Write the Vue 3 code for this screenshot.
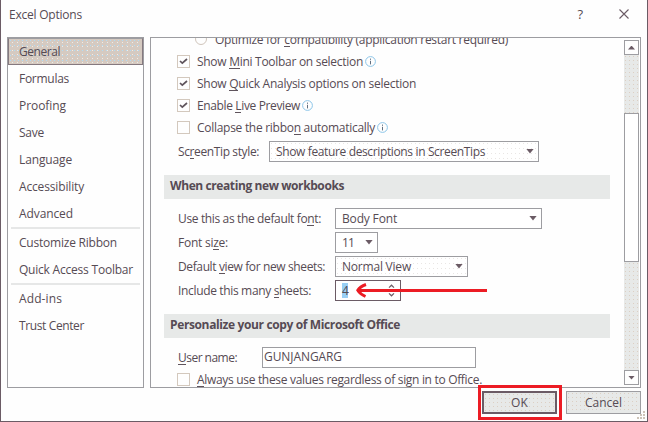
<script setup>
import { ref } from 'vue'

// Spreads a label to a set width by adjusting its tracking.
const vFit = {
  mounted(el, { value }) {
    const count = el.textContent.length
    const natural = el.getBoundingClientRect().width
    el.style.letterSpacing = `${(value - natural) / count}px`
  },
}

const groups = [
  [
    ['General', 41],
    ['Formulas', 50],
    ['Proofing', 47],
    ['Save', 25],
    ['Language', 53],
    ['Accessibility', 65],
    ['Advanced', 54],
  ],
  [
    ['Customize Ribbon', 98],
    ['Quick Access Toolbar', 114],
  ],
  [
    ['Add-ins', 43],
    ['Trust Center', 65],
  ],
]
const active = ref('General')

const checks = [
  { pre: 'Show ', key: 'M', post: 'ini Toolbar on selection', w: 166, on: true, info: true },
  { pre: 'Show ', key: 'Q', post: 'uick Analysis options on selection', w: 219, on: true, info: false },
  { pre: 'Enable ', key: 'L', post: 'ive Preview', w: 103, on: true, info: true },
  { pre: 'Collapse the ribbo', key: 'n', post: ' automatically', w: 178, on: false, info: true },
]
</script>

<template>
  <div class="window">
    <header class="titlebar">
      <span v-fit="73" class="title">Excel Options</span>
      <span class="help">?</span>
      <svg class="close" width="10" height="10" viewBox="0 0 10 10"><path d="M0.5 0.5 9.5 9.5M9.5 0.5 0.5 9.5" /></svg>
    </header>

    <main class="body">
      <nav class="side">
        <div v-for="(group, g) in groups" :key="g" class="group">
          <div v-for="[name, w] in group" :key="name" class="item" :class="{ active: name === active }" @click="active = name">
            <span v-fit="w">{{ name }}</span>
          </div>
        </div>
      </nav>

      <section class="panel">
        <div class="content">
          <div class="check radio-row">
            <span class="radio"></span>
            <span v-fit="293">Optimize for <u>c</u>ompatibility (application restart required)</span>
          </div>
          <div v-for="c in checks" :key="c.post" class="check">
            <span class="box"><svg v-if="c.on" width="11" height="11" viewBox="0 0 11 11"><path d="M2 5 4.3 7.2 9 3" /></svg></span>
            <span v-fit="c.w">{{ c.pre }}<u>{{ c.key }}</u>{{ c.post }}</span>
            <svg v-if="c.info" class="info" width="11" height="11" viewBox="0 0 11 11">
              <circle cx="5.5" cy="5.5" r="4.9" />
              <path d="M5.5 2.6v1.2M5.5 4.8v3.6" />
            </svg>
          </div>
          <div class="field tip">
            <span class="label"><span v-fit="81">Sc<u>r</u>eenTip style:</span></span>
            <div class="select dotted"><span v-fit="209">Show feature descriptions in ScreenTips</span><i class="caret"></i></div>
          </div>

          <h2><span v-fit="174">When creating new workbooks</span></h2>
          <div class="fields">
            <div class="field">
              <span class="label"><span v-fit="143">Use this as the default fo<u>n</u>t:</span></span>
              <div class="select font"><span v-fit="55">Body Font</span><i class="caret"></i></div>
            </div>
            <div class="field">
              <span class="label"><span v-fit="50">Font si<u>z</u>e:</span></span>
              <div class="select size"><span v-fit="12">11</span><i class="caret"></i></div>
            </div>
            <div class="field">
              <span class="label"><span v-fit="147">Default <u>v</u>iew for new sheets:</span></span>
              <div class="select view dotted"><span v-fit="69">Normal View</span><i class="caret"></i></div>
            </div>
            <div class="field">
              <span class="label"><span v-fit="133">Include this many <u>s</u>heets:</span></span>
              <div class="spinner">
                <span class="picked">4</span>
                <svg width="7" height="13" viewBox="0 0 7 13"><path d="M1 3.6 3.5 1.2 6 3.6M1 9.4 3.5 11.8 6 9.4" /></svg>
              </div>
            </div>
          </div>

          <h2><span v-fit="230">Personalize your copy of Microsoft Office</span></h2>
          <div class="field user">
            <span class="label"><span v-fit="59"><u>U</u>ser name:</span></span>
            <div class="input"><span v-fit="78">GUNJANGARG</span></div>
          </div>
          <div class="check always">
            <span class="box"></span>
            <span v-fit="285"><u>A</u>lways use these values regardless of sign in to Office.</span>
          </div>
        </div>

        <div class="scrollbar">
          <div class="arrow"><i class="up"></i></div>
          <div class="track before"></div>
          <div class="thumb"></div>
          <div class="track after"></div>
          <div class="arrow"><i class="caret"></i></div>
        </div>
      </section>
    </main>

    <footer class="footer">
      <button class="btn ok"><span v-fit="17">OK</span></button>
      <button class="btn"><span v-fit="37">Cancel</span></button>
    </footer>

    <svg class="grip" width="8" height="8" viewBox="0 0 8 8">
      <path d="M6 0h2v2h-2zM3 3h2v2h-2zM6 3h2v2h-2zM0 6h2v2h-2zM3 6h2v2h-2zM6 6h2v2h-2z" />
    </svg>
    <svg class="pointer" width="132" height="16" viewBox="0 0 132 16">
      <path d="M2 8.5H132" /><path d="M11 2.5Q5 4.5 2.8 8.3Q5 12 10.5 14.5" />
    </svg>
    <div class="highlight"></div>
  </div>
</template>

<style>
body {
  margin: 0;
}
</style>

<style scoped>
.window {
  position: relative;
  box-sizing: border-box;
  width: 648px;
  height: 422px;
  border: 1px solid #6b5b65;
  border-top: 0;
  background: #fefefe;
  color: #564b54;
  font: 12px/22px "Open Sans", "Noto Sans", sans-serif;
  overflow: hidden;
  white-space: nowrap;
}
u {
  text-decoration: none;
  background: linear-gradient(#5f545c, #5f545c) 0 calc(100% - 1px) / 100% 1px no-repeat;
}
.titlebar {
  display: flex;
  align-items: center;
  box-sizing: border-box;
  height: 37px;
  padding: 0 18px 7px 8px;
}
.title {
  margin-right: auto;
}
.help {
  margin-right: 36px;
  padding-bottom: 2px;
  font-size: 13px;
}
.close {
  margin-bottom: 2px;
  fill: none;
  stroke: #6b5b65;
  stroke-width: 1.1;
}
.body {
  display: flex;
  gap: 6px;
  height: 351px;
  padding: 0 6px;
}
.side,
.panel {
  box-sizing: border-box;
  border: 1px solid #9d9da1;
}
.side {
  width: 137px;
}
.group + .group::before {
  content: "";
  display: block;
  height: 2px;
  margin: 0 3px;
  background: #e6e7e7;
}
.item {
  box-sizing: border-box;
  height: 27px;
  padding-left: 11px;
  line-height: 27px;
}
.item.active {
  border: 1px solid #85797f;
  border-top-color: #9d9da1;
  padding-left: 10px;
  line-height: 26px;
  background-color: #d5cac1;
  background-image: radial-gradient(circle at 1.5px 1.5px, #b0dcf6 0.7px, transparent 0.9px),
    radial-gradient(circle at 3.5px 3.5px, #f1ebe5 0.7px, transparent 0.9px);
  background-size: 4px 5px, 5px 4px;
}
.panel {
  display: flex;
  flex: 1;
  overflow: hidden;
}
.content {
  flex: 1;
  padding: 0 14px 0 13px;
  margin-top: -9px;
}
.check {
  display: flex;
  align-items: center;
  height: 22px;
  padding-left: 13px;
}
.radio-row {
  padding-left: 31px;
}
.radio {
  box-sizing: border-box;
  width: 12px;
  height: 12px;
  margin: 0 8px 2px 0;
  border: 1px solid #d0c5bb;
  border-radius: 50%;
}
.box {
  box-sizing: border-box;
  width: 13px;
  height: 13px;
  margin: 0 7px 1px 0;
  border: 1px solid #d3c8bd;
}
.box svg {
  display: block;
  fill: none;
  stroke: #5f545c;
  stroke-width: 1.7;
}
.info {
  margin: 0 0 2px 2px;
  fill: none;
  stroke: #8cc5e8;
}
.info path {
  stroke: #5f6f80;
}
.field {
  display: flex;
  height: 21px;
  padding-left: 14px;
  line-height: 21px;
}
.tip {
  margin-top: 2px;
}
.label {
  width: 157px;
}
.tip .label {
  width: 91px;
}
.user .label {
  width: 84px;
}
.always {
  margin-top: 1px;
}
.select,
.spinner,
.input {
  display: flex;
  align-items: center;
  justify-content: space-between;
  box-sizing: border-box;
  height: 21px;
  padding: 0 4px 0 6px;
  border: 1px solid #9d9da1;
  background-color: #fff;
}
.tip .select {
  width: 270px;
}
.font {
  width: 207px;
}
.size {
  width: 43px;
}
.view {
  width: 133px;
}
.dotted {
  background-image: radial-gradient(circle at 1.5px 1.5px, #e9e6e4 0.6px, transparent 0.8px);
  background-size: 4px 5px;
}
.caret {
  width: 7px;
  height: 4px;
  background: #6b5b65;
  clip-path: polygon(0 0, 100% 0, 50% 100%);
}
.select .caret {
  width: 8px;
  height: 5px;
  margin-top: -1px;
}
.up {
  width: 7px;
  height: 4px;
  background: #6b5b65;
  clip-path: polygon(50% 0, 100% 100%, 0 100%);
}
.spinner {
  width: 66px;
  padding-right: 5px;
  border-color: #6b5b65;
}
.spinner svg {
  fill: none;
  stroke: #6b5b65;
  stroke-width: 1.2;
}
.picked {
  width: 6px;
  height: 15px;
  line-height: 15px;
  background: #99cff5;
}
.input {
  width: 214px;
  padding: 0 0 2px 1px;
}
h2 {
  box-sizing: border-box;
  width: 446px;
  height: 24px;
  margin: 13px 0 9px;
  padding-left: 6px;
  background: #e7e9e8;
  font-size: 12px;
  font-weight: 700;
  line-height: 21px;
}
.fields {
  display: grid;
  gap: 3px;
}
.scrollbar {
  display: flex;
  flex-direction: column;
  width: 15px;
  padding: 2px 1px 2px 0;
}
.arrow {
  display: flex;
  align-items: center;
  justify-content: center;
  box-sizing: border-box;
  height: 15px;
  border: 1px solid #9d9da1;
}
.thumb {
  box-sizing: border-box;
  height: 149px;
  border: 1px solid #9d9da1;
  background: #fff;
}
.track {
  background: radial-gradient(circle at 1.5px 1.5px, #dccfc3 0.6px, transparent 0.8px) 0 0 / 4px 4px #e7e9e8;
}
.before {
  height: 58px;
}
.after {
  flex: 1;
}
.footer {
  display: flex;
  justify-content: flex-end;
  gap: 9px;
  padding: 3px 6px 0 0;
}
.btn {
  box-sizing: border-box;
  width: 75px;
  height: 23px;
  padding: 0;
  border: 1px solid #9d9da1;
  background: radial-gradient(circle at 1.5px 1.5px, #dccfc3 0.6px, transparent 0.8px) 0 0 / 4px 4px #e7e9e8;
  color: inherit;
  font: inherit;
  line-height: 21px;
}
.ok {
  border: 2px solid #6b5b65;
  line-height: 19px;
}
.grip {
  position: absolute;
  right: 2px;
  bottom: 2px;
  fill: #cdc3b8;
}
.pointer {
  position: absolute;
  left: 354px;
  top: 282px;
  fill: none;
  stroke: #ec1c24;
  stroke-width: 3;
}
.highlight {
  position: absolute;
  left: 477px;
  top: 385px;
  box-sizing: border-box;
  width: 84px;
  height: 35px;
  border: 3px solid #ec1c24;
}
</style>
